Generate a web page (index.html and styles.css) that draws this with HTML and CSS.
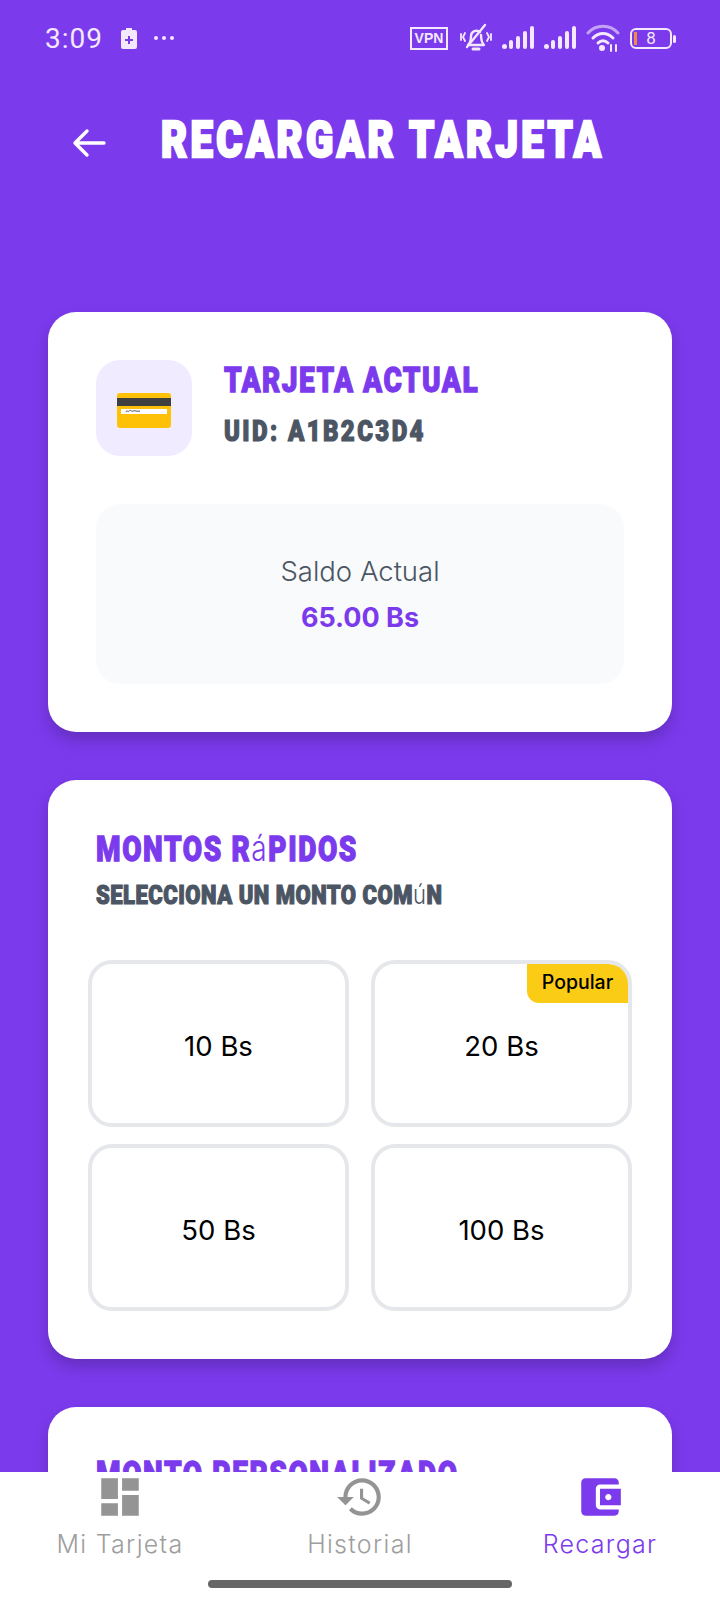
FILE: index.html
```html
<!doctype html>
<html lang="es">

<head>
    <meta charset="UTF-8">
    <meta name="viewport" content="width=device-width, initial-scale=1.0">
    <title>Recargar Tarjeta</title>
    <link rel="stylesheet" href="styles.css">
</head>

<body>
    <div class="app">
        <!-- barra de estado -->
        <div class="status-bar">
            <div class="status-left">
                <span class="clock">3:09</span>
                <svg class="st-charge" width="16" height="22" viewBox="0 0 16 22">
                    <path d="M5 1h6v2h3a2 2 0 0 1 2 2v15a2 2 0 0 1-2 2H2a2 2 0 0 1-2-2V5a2 2 0 0 1 2-2h3z" fill="#f3e8ff" />
                    <path d="M7 9h2v3h3v2H9v3H7v-3H4v-2h3z" fill="#7c3aed" />
                </svg>
                <svg class="st-dots" width="22" height="6" viewBox="0 0 22 6" fill="#f3e8ff">
                    <circle cx="3" cy="3" r="2" />
                    <circle cx="11" cy="3" r="2" />
                    <circle cx="19" cy="3" r="2" />
                </svg>
            </div>
            <div class="status-right">
                <span class="vpn">VPN</span>
                <svg width="32" height="30" viewBox="0 0 32 30" fill="none" stroke="#f3e8ff" stroke-width="2.4" stroke-linecap="round" stroke-linejoin="round">
                    <path d="M8 22c2-2 3-5 3-9a5.5 5.5 0 0 1 9-4M21 12c0 4 1 8 3 10H8" />
                    <path d="M13 26h6" stroke-width="3" />
                    <path d="M7 24 25 2" />
                    <path d="M5 10 3 14l2 4M1 11v6M27 10l2 4-2 4M31 11v6" stroke-width="1.8" />
                </svg>
                <svg width="32" height="24" viewBox="0 0 32 24" fill="#f3e8ff">
                    <rect x="0" y="18" width="5" height="5" rx="2.5" />
                    <rect x="7" y="14" width="4" height="9" rx="2" />
                    <rect x="14" y="10" width="4" height="13" rx="2" />
                    <rect x="21" y="5" width="4" height="18" rx="2" />
                    <rect x="28" y="0" width="4" height="23" rx="2" />
                </svg>
                <svg width="32" height="24" viewBox="0 0 32 24" fill="#f3e8ff">
                    <rect x="0" y="18" width="5" height="5" rx="2.5" />
                    <rect x="7" y="14" width="4" height="9" rx="2" />
                    <rect x="14" y="10" width="4" height="13" rx="2" />
                    <rect x="21" y="5" width="4" height="18" rx="2" />
                    <rect x="28" y="0" width="4" height="23" rx="2" />
                </svg>
                <svg width="34" height="28" viewBox="0 0 34 28" fill="none" stroke-linecap="round">
                    <path d="M2 9C10 0 24 0 32 9" stroke="#c4a3f7" stroke-width="3" />
                    <path d="M7 14c6-6 14-6 20 0" stroke="#f3e8ff" stroke-width="3" />
                    <path d="M12 19c3-3 7-3 10 0" stroke="#f3e8ff" stroke-width="3" />
                    <circle cx="16" cy="24" r="3" fill="#f3e8ff" />
                    <path d="M25 21v6M30 21v6" stroke="#f3e8ff" stroke-width="2" />
                </svg>
                <div class="battery">
                    <span class="battery-low"></span>
                    <span class="battery-num">8</span>
                </div>
            </div>
        </div>

        <!-- encabezado -->
        <header class="top-bar">
            <svg class="back" width="34" height="30" viewBox="0 0 34 30" fill="none" stroke="#fff" stroke-width="3.4" stroke-linecap="round" stroke-linejoin="round">
                <path d="M32 15H3M15 3 3 15l12 12" />
            </svg>
            <h1 class="display page-title">RECARGAR TARJETA</h1>
        </header>

        <main class="content">
            <!-- tarjeta actual -->
            <section class="card">
                <div class="card-head">
                    <div class="card-icon">
                        <svg width="54" height="35" viewBox="0 0 54 35">
                            <rect width="54" height="35" rx="3" fill="#ffc107" />
                            <rect y="5" width="54" height="8" fill="#3f3f3f" />
                            <rect x="4" y="16" width="46" height="5" fill="#fff" />
                            <path d="M9 19c1-3 2 1 3-1s2 1 4 0 4 1 7 0" fill="none" stroke="#555" stroke-width="1" />
                        </svg>
                    </div>
                    <div>
                        <h2 class="display head-title">TARJETA ACTUAL</h2>
                        <p class="display head-uid">UID: A1B2C3D4</p>
                    </div>
                </div>
                <div class="balance">
                    <span class="balance-label">Saldo Actual</span>
                    <strong class="balance-value">65.00 Bs</strong>
                </div>
            </section>

            <!-- montos rapidos -->
            <section class="card">
                <h2 class="display quick-title">MONTOS R<span class="fallback">á</span>PIDOS</h2>
                <p class="display quick-sub">SELECCIONA UN MONTO COM<span class="fallback">ú</span>N</p>
                <div class="amounts">
                    <button class="amount">10 Bs</button>
                    <button class="amount">20 Bs<span class="badge">Popular</span></button>
                    <button class="amount">50 Bs</button>
                    <button class="amount">100 Bs</button>
                </div>
            </section>

            <!-- monto personalizado -->
            <section class="card">
                <h2 class="display quick-title">MONTO PERSONALIZADO</h2>
            </section>
        </main>

        <!-- navegacion inferior -->
        <nav class="bottom-nav">
            <a class="nav-item">
                <svg width="50" height="50" viewBox="0 0 24 24" fill="#949494">
                    <path d="M3 13h8V3H3v10zm0 8h8v-6H3v6zm10 0h8V11h-8v10zm0-18v6h8V3h-8z" />
                </svg>
                <span>Mi Tarjeta</span>
            </a>
            <a class="nav-item">
                <svg width="50" height="50" viewBox="0 0 24 24" fill="#949494">
                    <path d="M13 3a9 9 0 0 0-9 9H1l3.89 3.89.07.14L9 12H6c0-3.87 3.13-7 7-7s7 3.13 7 7-3.13 7-7 7c-1.93 0-3.68-.79-4.94-2.06l-1.42 1.42A8.954 8.954 0 0 0 13 21a9 9 0 0 0 0-18zm-1 5v5l4.28 2.54.72-1.21-3.5-2.08V8H12z" />
                </svg>
                <span>Historial</span>
            </a>
            <a class="nav-item active">
                <svg width="50" height="50" viewBox="0 0 24 24" fill="#7c3aed">
                    <path d="M21 18v1c0 1.1-.9 2-2 2H5c-1.11 0-2-.9-2-2V5c0-1.1.89-2 2-2h14c1.1 0 2 .9 2 2v1h-9c-1.11 0-2 .9-2 2v8c0 1.1.89 2 2 2h9zm-9-2h10V8H12v8zm4-2.5c-.83 0-1.5-.67-1.5-1.5s.67-1.5 1.5-1.5 1.5.67 1.5 1.5-.67 1.5-1.5 1.5z" />
                </svg>
                <span>Recargar</span>
            </a>
            <div class="home-bar"></div>
        </nav>
    </div>
</body>

</html>
```

FILE: styles.css
```css
* {
    box-sizing: border-box;
}

body {
    margin: 0;
    font-family: "Inter", "Noto Sans", sans-serif;
    background-color: #7c3aed;
}

.app {
    position: relative;
    width: 720px;
    height: 1600px;
    overflow: hidden;
    background-color: #7c3aed;
}

/* barra de estado */
.status-bar {
    display: flex;
    justify-content: space-between;
    align-items: center;
    height: 76px;
    padding: 0 48px 0 45px;
    color: #f3e8ff;
}

.status-left,
.status-right {
    display: flex;
    align-items: center;
}

.clock {
    font-family: "Roboto", sans-serif;
    font-size: 28px;
    letter-spacing: 1px;
    margin-right: 18px;
}

.st-dots {
    margin-left: 16px;
}

.status-right {
    gap: 10px;
}

.vpn {
    width: 38px;
    height: 23px;
    margin-right: 2px;
    border: 2px solid #f3e8ff;
    font-family: "Liberation Sans", sans-serif;
    font-size: 14px;
    font-weight: 700;
    line-height: 19px;
    text-align: center;
}

.battery {
    position: relative;
    display: flex;
    align-items: center;
    justify-content: center;
    width: 42px;
    height: 21px;
    border: 2px solid #f3e8ff;
    border-radius: 6px;
    font-family: "Roboto", sans-serif;
    font-size: 17px;
}

.battery::after {
    content: "";
    position: absolute;
    right: -6px;
    top: 5px;
    width: 3px;
    height: 8px;
    border-radius: 2px;
    background-color: #f3e8ff;
}

.battery-low {
    position: absolute;
    left: 2px;
    top: 2px;
    width: 3px;
    height: 13px;
    background-color: #f08a4b;
}

/* encabezado */
.top-bar {
    display: flex;
    align-items: center;
    gap: 55px;
    height: 124px;
    padding: 0 0 0 72px;
    margin-bottom: 112px;
}

.top-bar .back {
    flex: none;
    margin-top: 10px;
}

/* la fuente de titulos: pesada y alta */
.display {
    display: block;
    margin: 0;
    font-family: "Roboto", sans-serif;
    font-weight: 900;
    white-space: nowrap;
    transform-origin: left center;
    -webkit-text-stroke: 1px currentColor;
}

.fallback {
    font-family: "Inter", sans-serif;
    font-weight: 300;
    -webkit-text-stroke: 0;
}

.page-title {
    margin-top: 3px;
    color: #ffffff;
    font-size: 40px;
    letter-spacing: 3.4px;
    transform: scaleY(1.26);
    -webkit-text-stroke: 2px #fff;
}

/* tarjetas */
.content {
    display: flex;
    flex-direction: column;
    gap: 48px;
    padding: 0 48px;
}

.card {
    padding: 48px;
    background-color: #ffffff;
    border-radius: 28px;
    box-shadow: 0 8px 16px rgba(0, 0, 0, 0.2);
}

.card-head {
    display: flex;
    align-items: flex-start;
    gap: 32px;
    margin-bottom: 48px;
}

.card-icon {
    display: flex;
    align-items: center;
    justify-content: center;
    width: 96px;
    height: 96px;
    padding-top: 4px;
    border-radius: 24px;
    background-color: #f0ebfe;
}

.head-title {
    margin-top: 4px;
    color: #7c3aed;
    font-size: 28px;
    letter-spacing: 1.5px;
    transform: scaleY(1.26);
}

.head-uid {
    margin-top: 20px;
    color: #4b5563;
    font-size: 24px;
    letter-spacing: 2.4px;
    transform: scaleY(1.2);
}

.balance {
    display: flex;
    flex-direction: column;
    align-items: center;
    justify-content: center;
    gap: 13px;
    height: 180px;
    background-color: #f9fafb;
    border-radius: 24px;
}

.balance-label {
    color: #4b5563;
    font-size: 27.5px;
    font-weight: 300;
}

.balance-value {
    color: #7c3aed;
    font-size: 27px;
    font-weight: 700;
}

/* montos rapidos */
.quick-title {
    margin-top: 3px;
    color: #7c3aed;
    font-size: 28px;
    letter-spacing: 1.6px;
    transform: scaleY(1.26);
}

.quick-sub {
    margin-top: 16px;
    color: #4b5563;
    font-size: 22px;
    letter-spacing: 0.5px;
    transform: scaleY(1.2);
}

.amounts {
    display: grid;
    grid-template-columns: repeat(2, 261px);
    grid-auto-rows: 167px;
    column-gap: 22px;
    row-gap: 17px;
    margin: 53px -8px 0;
}

.amount {
    position: relative;
    padding: 4px 0 0;
    background-color: #ffffff;
    border: 4px solid #e5e7eb;
    border-radius: 24px;
    color: #000000;
    font-family: "Inter", sans-serif;
    font-size: 27.5px;
    font-weight: 400;
}

.badge {
    position: absolute;
    top: 0;
    right: 0;
    width: 101px;
    height: 39px;
    background-color: #facc15;
    border-radius: 0 20px 0 12px;
    font-family: "Inter", sans-serif;
    font-size: 19.5px;
    font-weight: 500;
    line-height: 36px;
    text-align: center;
}

/* navegacion inferior */
.bottom-nav {
    position: absolute;
    left: 0;
    right: 0;
    bottom: 0;
    display: grid;
    grid-template-columns: repeat(3, 240px);
    height: 128px;
    background-color: #ffffff;
}

.nav-item {
    display: flex;
    flex-direction: column;
    align-items: center;
    gap: 7px;
    height: 92px;
    color: #9e9e9e;
    font-size: 25px;
    font-weight: 300;
    letter-spacing: 1.3px;
}

.nav-item.active {
    color: #7c3aed;
}

.home-bar {
    position: absolute;
    left: 208px;
    bottom: 12px;
    width: 304px;
    height: 8px;
    border-radius: 4px;
    background-color: #666666;
}
```
